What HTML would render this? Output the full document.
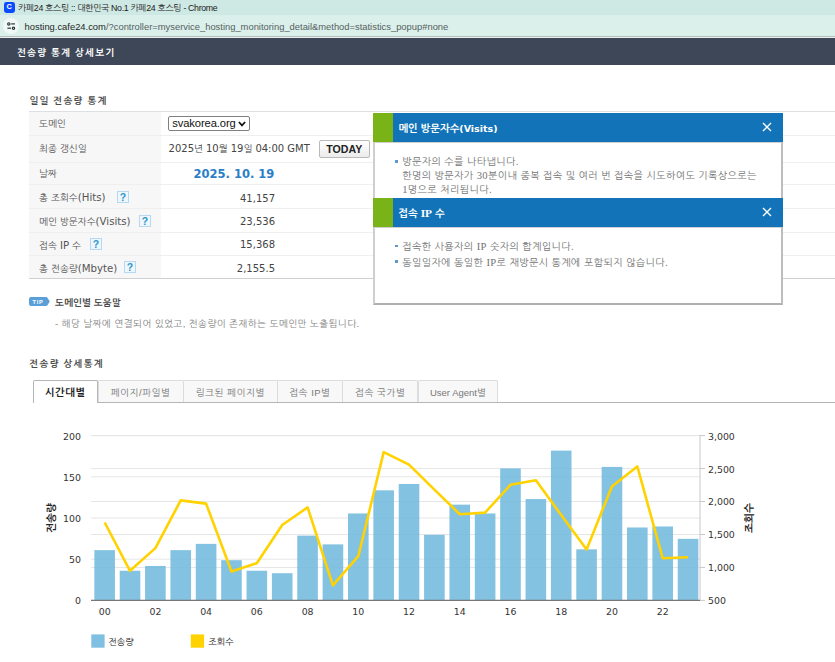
<!DOCTYPE html>
<html lang="ko"><head><meta charset="utf-8"><title>카페24 호스팅 :: 대한민국 No.1 카페24 호스팅</title>
<style>
*{box-sizing:border-box;margin:0;padding:0}
html,body{width:835px;height:662px;overflow:hidden;background:#fff}
body{position:relative;font-family:"DejaVu Sans","Liberation Sans","NanumGothic","Noto Sans CJK KR",sans-serif;font-size:9.5px;color:#444}
.l{font-size:10.2px}
.m{font-size:10px}
.abs,.th,.hl,.q,.v,.tab{position:absolute}
.titlebar{position:absolute;left:0;top:0;width:835px;height:14.5px;background:#cee8e3}
.urlbar{position:absolute;left:0;top:14.5px;width:835px;height:22.3px;background:#dbf0eb}
.urlline{position:absolute;left:0;top:36px;width:835px;height:2px;background:#eaf1ef;border-top:1px solid #b3bebb}
.fav{position:absolute;left:4px;top:2px;width:10.5px;height:10.5px;border-radius:2.4px;background:#0a4bff;color:#fff;font-weight:bold;font-size:7.4px;line-height:10.7px;text-align:center;font-family:"Liberation Sans",sans-serif}
.ttxt{position:absolute;left:18px;top:0;height:14.5px;line-height:16.4px;font-size:8.8px;letter-spacing:-0.34px;color:#222;white-space:nowrap;font-family:"Liberation Sans","NanumGothic",sans-serif}
.circ{position:absolute;left:2.8px;top:18px;width:16px;height:16px;border-radius:50%;background:#f1f9f7}
.url{position:absolute;left:24.6px;top:14.5px;height:22.3px;line-height:23px;font-size:9.39px;color:#56605e;white-space:nowrap;font-family:"Liberation Sans",sans-serif}
.url b{font-weight:normal;color:#1f2725}
.head{position:absolute;left:0;top:38px;width:835px;height:26.6px;background:#3e4757}
.head span{position:absolute;left:17px;top:0;line-height:29.6px;color:#fff;font-weight:bold;font-size:9.5px;letter-spacing:1.15px;font-family:"Liberation Sans","NanumGothic",sans-serif;white-space:nowrap}
.h3{position:absolute;left:29.5px;font-weight:bold;font-size:9.4px;color:#4a4a4a;letter-spacing:1.25px;white-space:nowrap;font-family:"Liberation Sans","NanumGothic",sans-serif}
.th{left:29px;width:131.5px;background:#f7f7f7;color:#555;font-size:9.5px;white-space:nowrap}
.th .lb{position:absolute;left:10px;top:1.2px}
.hl{left:29px;width:806px;height:1px;background:#efefef}
.hl.top{background:#dde0e3}
.hl.last{background:#d0d0d0;height:1.2px}
.q{width:11.8px;height:11.8px;border:1px solid #b5d9f3;background:#eff7fc;color:#2e96cc;font-weight:bold;font-size:10.4px;line-height:11.6px;text-align:center;font-family:"Liberation Sans",sans-serif}
.num{position:absolute;width:60px;left:215px;text-align:right;font-family:"DejaVu Sans","Liberation Sans",sans-serif;font-size:10px;color:#444;height:12px;line-height:12px}
.sel{position:absolute;left:168.2px;top:116.4px;width:81.6px;height:14.6px;border:1px solid #808080;border-radius:2px;background:#fff;font-family:"Liberation Sans",sans-serif;font-size:11.2px;letter-spacing:-0.1px;line-height:13.4px;color:#111;padding-left:3px;white-space:nowrap}
.date{position:absolute;left:168.6px;top:141.6px;font-family:"DejaVu Sans","NanumGothic",sans-serif;font-size:9.5px;line-height:13px;color:#444;white-space:nowrap}
.btn{position:absolute;left:318.5px;top:139.8px;width:51.6px;height:18.4px;border:1px solid #b9b9b9;border-radius:2px;background:linear-gradient(#fff,#ececec);font-family:"Liberation Sans",sans-serif;font-weight:bold;font-size:10.6px;line-height:17.5px;text-align:center;color:#222}
.big{position:absolute;left:180px;width:108px;text-align:center;top:167.3px;font-family:"DejaVu Sans","Liberation Sans",sans-serif;font-weight:bold;font-size:11.5px;line-height:15px;color:#2a7ec8;white-space:nowrap}
.pop{position:absolute;left:372.6px;top:113.2px;width:410px;height:192px;background:#fff}
.pop .bd{position:absolute;left:0;width:410px;border:2px solid #cfcfcf;border-top-width:1px;border-right-color:#bdbdbd;background:#fff}
.pop .ph{position:absolute;left:0;width:410px;height:28.8px;background:#1273b8;color:#fff;font-weight:bold;font-size:10.3px;line-height:31.2px;padding-left:25.8px;white-space:nowrap;font-family:"Liberation Sans","NanumGothic",sans-serif}
.pop .ph i{position:absolute;left:0;top:0;width:20.2px;height:100%;background:#7ab317}
.pop p{position:absolute;left:29.6px;color:#747474;font-family:"Liberation Sans","NanumGothic",sans-serif;font-size:10px;line-height:13.8px;white-space:nowrap;letter-spacing:0.35px}
.pop .bl{position:absolute;left:22.4px;width:2.6px;height:2.6px;background:#5f97ca}
.sf{font-family:"Liberation Serif",serif;font-size:10.6px}
.tip{position:absolute;left:29px;top:297px}
.g{color:#838383}
.tabline{position:absolute;left:32.5px;top:401.7px;width:803px;height:1px;background:#b5b5b5}
.tab{top:380.3px;height:21.6px;border:1px solid #dcdcdc;border-bottom:none;border-radius:2px 2px 0 0;background:#f8f8f8;color:#777;font-size:9.5px;line-height:24.4px;text-align:center;white-space:nowrap;letter-spacing:0.5px;font-family:"Liberation Sans","NanumGothic",sans-serif}
.tab.on{background:#fff;border-color:#b5b5b5;color:#222;font-weight:bold;font-size:10.2px;letter-spacing:0.6px;height:22.6px;z-index:2}
.chart{position:absolute;left:0;top:400px}
.chart .ax{font-family:"DejaVu Sans","Liberation Sans",sans-serif;font-size:9.4px;fill:#333}
.chart .at{font-family:"Liberation Sans","NanumGothic",sans-serif;font-size:10.6px;font-weight:bold;fill:#222}
.chart .lg{font-family:"Liberation Sans","NanumGothic",sans-serif;font-size:9px;fill:#1c1c1c}
</style></head><body>
<div class="titlebar"><div class="fav">C</div><div class="ttxt">카페24 호스팅 :: 대한민국 No.1 카페24 호스팅 - Chrome</div></div>
<div class="urlbar"></div><div class="urlline"></div>
<div class="circ"><svg width="16" height="16" viewBox="0 0 16 16"><g stroke="#2c3432" stroke-width="1.2" fill="none"><circle cx="5.8" cy="5.9" r="1.15"/><line x1="8.2" y1="5.9" x2="11.9" y2="5.9"/><line x1="4.4" y1="10.2" x2="8" y2="10.2"/><circle cx="10.5" cy="10.2" r="1.15"/></g></svg></div>
<div class="url"><b>hosting.cafe24.com</b>/?controller=myservice_hosting_monitoring_detail&amp;method=statistics_popup#none</div>
<div class="head"><span>전송량 통계 상세보기</span></div>

<div class="h3" style="top:95.2px">일일 전송량 통계</div>
<div class="th" style="top:111.4px;height:24.0px;line-height:24.0px"><span class="lb" style="top:0.2px">도메인</span></div>
<div class="hl top" style="top:110.9px"></div>
<div class="th" style="top:135.4px;height:27.2px;line-height:27.2px"><span class="lb" style="top:-0.4px">최종 갱신일</span></div>
<div class="hl" style="top:134.9px"></div>
<div class="th" style="top:162.6px;height:21.8px;line-height:21.8px"><span class="lb" style="top:0px">날짜</span></div>
<div class="hl" style="top:162.1px"></div>
<div class="th" style="top:184.4px;height:24.0px;line-height:24.0px"><span class="lb">총 조회수<span class="l">(Hits)</span></span></div>
<div class="hl" style="top:183.9px"></div>
<div class="q" style="left:117.1px;top:191.1px">?</div>
<div class="th" style="top:208.4px;height:24.0px;line-height:24.0px"><span class="lb">메인 방문자수<span class="l">(Visits)</span></span></div>
<div class="hl" style="top:207.9px"></div>
<div class="q" style="left:139px;top:215px">?</div>
<div class="th" style="top:232.4px;height:23.0px;line-height:23.0px"><span class="lb">접속 <span class="l">IP</span> 수</span></div>
<div class="hl" style="top:231.9px"></div>
<div class="q" style="left:90.1px;top:238.3px">?</div>
<div class="th" style="top:255.4px;height:23.0px;line-height:23.0px"><span class="lb">총 전송량<span class="l">(Mbyte)</span></span></div>
<div class="hl" style="top:254.9px"></div>
<div class="q" style="left:124.1px;top:261.1px">?</div>
<div class="hl last" style="top:277.9px"></div>
<div class="sel">svakorea.org<svg style="position:absolute;right:2.6px;top:3.8px" width="8" height="6" viewBox="0 0 8 6"><path d="M0.9 1 L4 4.4 L7.1 1" fill="none" stroke="#111" stroke-width="1.7"/></svg></div>
<div class="date"><span class="m">2025</span>년 <span class="m">10</span>월 <span class="m">19</span>일 <span class="m">04:00 GMT</span></div>
<div class="btn">TODAY</div>
<div class="big">2025. 10. 19</div>
<div class="num" style="top:192.6px">41,157</div>
<div class="num" style="top:216.2px">23,536</div>
<div class="num" style="top:239.2px">15,368</div>
<div class="num" style="top:262.8px">2,155.5</div>

<div class="pop">
 <div class="bd" style="top:28.8px;height:56.4px;border-bottom:none"></div>
 <div class="bd" style="top:113.6px;height:78.4px;border-bottom-width:2px;border-bottom-color:#b0b0b0"></div>
 <div class="ph" style="top:0"><i></i>메인 방문자수<span style="font-family:'DejaVu Sans',sans-serif;font-size:9.5px">(Visits)</span><svg style="position:absolute;left:389.5px;top:8.6px" width="10" height="10" viewBox="0 0 10 10"><path d="M1 1 L9 9 M9 1 L1 9" stroke="#fff" stroke-width="1.4" fill="none"/></svg></div>
 <div class="ph" style="top:84.8px"><i></i>접속 <span class="sf" style="font-size:11.4px">IP</span> 수<svg style="position:absolute;left:389.5px;top:8.6px" width="10" height="10" viewBox="0 0 10 10"><path d="M1 1 L9 9 M9 1 L1 9" stroke="#fff" stroke-width="1.4" fill="none"/></svg></div>
 <div class="bl" style="top:46.8px"></div>
 <p style="top:41.8px">방문자의 수를 나타냅니다.<br>한명의 방문자가 <span class="sf">30</span>분이내 중복 접속 및 여러 번 접속을 시도하여도 기록상으로는<br><span class="sf">1</span>명으로 처리됩니다.</p>
 <div class="bl" style="top:131.6px"></div>
 <p style="top:127px">접속한 사용자의 <span class="sf">IP</span> 숫자의 합계입니다.</p>
 <div class="bl" style="top:147.2px"></div>
 <p style="top:142.6px">동일일자에 동일한 <span class="sf">IP</span>로 재방문시 통계에 포함되지 않습니다.</p>
</div>

<svg class="tip" width="22" height="9" viewBox="0 0 22 9"><path d="M2 0 H17 Q18 0 18.4 0.8 L20.8 4.5 L18.4 8.2 Q18 9 17 9 H2 Q0 9 0 7 V2 Q0 0 2 0 Z" fill="#5b9fd8"/><text x="3.6" y="6.5" font-family="Liberation Sans,sans-serif" font-weight="bold" font-size="5.6" letter-spacing="0.7" fill="#fff">TIP</text></svg>
<div class="h3" style="top:296.8px;left:55px;letter-spacing:0.2px">도메인별 도움말</div>
<div class="abs g" style="left:55px;top:318px;font-size:9.5px;white-space:nowrap;letter-spacing:0.4px;font-family:'Liberation Sans','NanumGothic',sans-serif">- 해당 날짜에 연결되어 있었고, 전송량이 존재하는 도메인만 노출됩니다.</div>

<div class="h3" style="top:358.2px">전송량 상세통계</div>
<div class="tabline"></div>
<div class="tab on" style="left:32.5px;width:65.5px">시간대별</div>
<div class="tab" style="left:97.5px;width:86px">페이지/파일별</div>
<div class="tab" style="left:183px;width:94.5px">링크된 페이지별</div>
<div class="tab" style="left:277px;width:65.7px">접속 IP별</div>
<div class="tab" style="left:342.2px;width:76px">접속 국가별</div>
<div class="tab" style="left:417.7px;width:80.5px;letter-spacing:0">User Agent별</div>
<svg class="chart" width="835" height="262" viewBox="0 400 835 262">
<line x1="91" x2="700" y1="435.60" y2="435.60" stroke="#e6e6e6" stroke-width="1"/>
<line x1="700" x2="705" y1="435.60" y2="435.60" stroke="#c8c8c8" stroke-width="1"/>
<line x1="91" x2="700" y1="468.56" y2="468.56" stroke="#e6e6e6" stroke-width="1"/>
<line x1="700" x2="705" y1="468.56" y2="468.56" stroke="#c8c8c8" stroke-width="1"/>
<line x1="91" x2="700" y1="501.52" y2="501.52" stroke="#e6e6e6" stroke-width="1"/>
<line x1="700" x2="705" y1="501.52" y2="501.52" stroke="#c8c8c8" stroke-width="1"/>
<line x1="91" x2="700" y1="534.48" y2="534.48" stroke="#e6e6e6" stroke-width="1"/>
<line x1="700" x2="705" y1="534.48" y2="534.48" stroke="#c8c8c8" stroke-width="1"/>
<line x1="91" x2="700" y1="567.44" y2="567.44" stroke="#e6e6e6" stroke-width="1"/>
<line x1="700" x2="705" y1="567.44" y2="567.44" stroke="#c8c8c8" stroke-width="1"/>
<line x1="91" x2="700" y1="600.40" y2="600.40" stroke="#e6e6e6" stroke-width="1"/>
<line x1="700" x2="705" y1="600.40" y2="600.40" stroke="#c8c8c8" stroke-width="1"/>
<line x1="91" x2="700" y1="435.60" y2="435.60" stroke="#e6e6e6" stroke-width="1"/>
<line x1="91" x2="700" y1="476.80" y2="476.80" stroke="#e6e6e6" stroke-width="1"/>
<line x1="91" x2="700" y1="518.00" y2="518.00" stroke="#e6e6e6" stroke-width="1"/>
<line x1="91" x2="700" y1="559.20" y2="559.20" stroke="#e6e6e6" stroke-width="1"/>
<line x1="91" x2="700" y1="600.40" y2="600.40" stroke="#e6e6e6" stroke-width="1"/>
<rect x="94.35" y="550.14" width="20.6" height="50.26" fill="#6fb7dc" fill-opacity="0.85"/>
<rect x="119.72" y="570.74" width="20.6" height="29.66" fill="#6fb7dc" fill-opacity="0.85"/>
<rect x="145.08" y="565.96" width="20.6" height="34.44" fill="#6fb7dc" fill-opacity="0.85"/>
<rect x="170.44" y="550.14" width="20.6" height="50.26" fill="#6fb7dc" fill-opacity="0.85"/>
<rect x="195.81" y="543.87" width="20.6" height="56.53" fill="#6fb7dc" fill-opacity="0.85"/>
<rect x="221.17" y="560.19" width="20.6" height="40.21" fill="#6fb7dc" fill-opacity="0.85"/>
<rect x="246.54" y="570.74" width="20.6" height="29.66" fill="#6fb7dc" fill-opacity="0.85"/>
<rect x="271.90" y="573.21" width="20.6" height="27.19" fill="#6fb7dc" fill-opacity="0.85"/>
<rect x="297.27" y="535.63" width="20.6" height="64.77" fill="#6fb7dc" fill-opacity="0.85"/>
<rect x="322.63" y="544.37" width="20.6" height="56.03" fill="#6fb7dc" fill-opacity="0.85"/>
<rect x="348.00" y="513.47" width="20.6" height="86.93" fill="#6fb7dc" fill-opacity="0.85"/>
<rect x="373.36" y="490.31" width="20.6" height="110.09" fill="#6fb7dc" fill-opacity="0.85"/>
<rect x="398.73" y="483.97" width="20.6" height="116.43" fill="#6fb7dc" fill-opacity="0.85"/>
<rect x="424.09" y="534.81" width="20.6" height="65.59" fill="#6fb7dc" fill-opacity="0.85"/>
<rect x="449.46" y="504.65" width="20.6" height="95.75" fill="#6fb7dc" fill-opacity="0.85"/>
<rect x="474.82" y="513.47" width="20.6" height="86.93" fill="#6fb7dc" fill-opacity="0.85"/>
<rect x="500.19" y="468.40" width="20.6" height="132.00" fill="#6fb7dc" fill-opacity="0.85"/>
<rect x="525.56" y="499.05" width="20.6" height="101.35" fill="#6fb7dc" fill-opacity="0.85"/>
<rect x="550.92" y="450.60" width="20.6" height="149.80" fill="#6fb7dc" fill-opacity="0.85"/>
<rect x="576.28" y="549.31" width="20.6" height="51.09" fill="#6fb7dc" fill-opacity="0.85"/>
<rect x="601.65" y="466.91" width="20.6" height="133.49" fill="#6fb7dc" fill-opacity="0.85"/>
<rect x="627.01" y="527.48" width="20.6" height="72.92" fill="#6fb7dc" fill-opacity="0.85"/>
<rect x="652.38" y="526.49" width="20.6" height="73.91" fill="#6fb7dc" fill-opacity="0.85"/>
<rect x="677.75" y="538.85" width="20.6" height="61.55" fill="#6fb7dc" fill-opacity="0.85"/>
<line x1="700" x2="700" y1="435" y2="600.4" stroke="#c8c8c8" stroke-width="1"/>
<line x1="91" x2="700" y1="600.4" y2="600.4" stroke="#777" stroke-width="1.2"/>
<polyline points="104.7,522.5 130.0,570.8 155.4,548.1 180.7,500.4 206.1,503.6 231.5,571.5 256.8,563.2 282.2,525.0 307.6,507.4 332.9,585.4 358.3,556.2 383.7,452.1 409.0,464.6 434.4,489.7 459.8,514.2 485.1,512.6 510.5,484.8 535.9,480.2 561.2,515.0 586.6,549.4 611.9,486.5 637.3,466.4 662.7,558.2 688.0,557.2" fill="none" stroke="#ffd200" stroke-width="2.6" stroke-linejoin="round" stroke-linecap="butt"/>
<text x="81" y="439.8" text-anchor="end" class="ax">200</text>
<text x="81" y="480.8" text-anchor="end" class="ax">150</text>
<text x="81" y="521.8" text-anchor="end" class="ax">100</text>
<text x="81" y="562.8" text-anchor="end" class="ax">50</text>
<text x="81" y="603.8" text-anchor="end" class="ax">0</text>
<text x="708" y="439.8" class="ax">3,000</text>
<text x="708" y="472.6" class="ax">2,500</text>
<text x="708" y="505.4" class="ax">2,000</text>
<text x="708" y="538.2" class="ax">1,500</text>
<text x="708" y="571.0" class="ax">1,000</text>
<text x="708" y="603.8" class="ax">500</text>
<text x="104.7" y="615.3" text-anchor="middle" class="ax">00</text>
<text x="155.4" y="615.3" text-anchor="middle" class="ax">02</text>
<text x="206.1" y="615.3" text-anchor="middle" class="ax">04</text>
<text x="256.8" y="615.3" text-anchor="middle" class="ax">06</text>
<text x="307.6" y="615.3" text-anchor="middle" class="ax">08</text>
<text x="358.3" y="615.3" text-anchor="middle" class="ax">10</text>
<text x="409.0" y="615.3" text-anchor="middle" class="ax">12</text>
<text x="459.8" y="615.3" text-anchor="middle" class="ax">14</text>
<text x="510.5" y="615.3" text-anchor="middle" class="ax">16</text>
<text x="561.2" y="615.3" text-anchor="middle" class="ax">18</text>
<text x="611.9" y="615.3" text-anchor="middle" class="ax">20</text>
<text x="662.7" y="615.3" text-anchor="middle" class="ax">22</text>
<text transform="translate(55,518) rotate(-90)" text-anchor="middle" class="at">전송량</text>
<text transform="translate(753,518) rotate(-90)" text-anchor="middle" class="at">조회수</text>
<rect x="91.3" y="634.4" width="13.3" height="13.3" fill="#7fc0e2"/>
<text x="108.4" y="644.6" class="lg">전송량</text>
<rect x="190.8" y="634.4" width="13.3" height="13.3" fill="#ffd200"/>
<text x="208.3" y="644.6" class="lg">조회수</text>
</svg>
</body></html>
